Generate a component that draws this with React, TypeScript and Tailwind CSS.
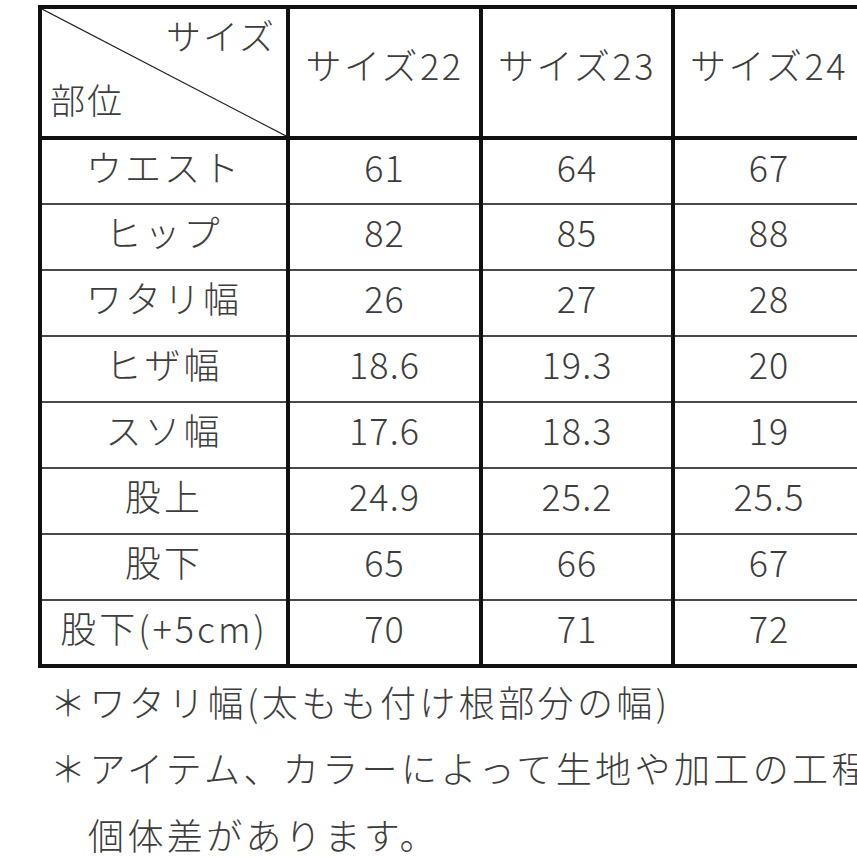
const rows: [string, string, string, string][] = [
  ['ウエスト', '61', '64', '67'],
  ['ヒップ', '82', '85', '88'],
  ['ワタリ幅', '26', '27', '28'],
  ['ヒザ幅', '18.6', '19.3', '20'],
  ['スソ幅', '17.6', '18.3', '19'],
  ['股上', '24.9', '25.2', '25.5'],
  ['股下', '65', '66', '67'],
  ['股下(+5cm)', '70', '71', '72'],
];

export default function App() {
  return (
    <div className="w-[857px] h-[857px] overflow-hidden bg-white text-[#3d3d3d] font-light font-['Noto_Sans_CJK_JP',sans-serif]">
      <table className="ml-[38px] mt-[5px] table-fixed border-collapse w-[825px]">
        <colgroup>
          <col className="w-[248px]" />
          <col className="w-[193px]" />
          <col className="w-[192px]" />
          <col className="w-[192px]" />
        </colgroup>
        <thead>
          <tr className="h-[131px]">
            <th className="relative border-4 border-[#111] p-0 font-light">
              {/* diagonal split */}
              <svg className="absolute inset-0 w-full h-full" preserveAspectRatio="none" viewBox="0 0 100 100">
                <line x1="0" y1="0" x2="100" y2="100" stroke="#222" strokeWidth="1.2" vectorEffect="non-scaling-stroke" />
              </svg>
              <div className="relative flex flex-col h-[127px] text-[35px] leading-none tracking-[2px]">
                <span className="self-end mr-[10px] mt-[8px]">サイズ</span>
                <span className="self-start ml-[8px] mt-[29px]">部位</span>
              </div>
            </th>
            {['サイズ22', 'サイズ23', 'サイズ24'].map((s) => (
              <th
                key={s}
                className="border-4 border-[#111] p-0 pb-[18px] font-light text-[36px] leading-none tracking-[2.5px] text-center whitespace-nowrap"
              >
                {s}
              </th>
            ))}
          </tr>
        </thead>
        <tbody>
          {rows.map((r, i) => (
            <tr key={r[0]} className="h-[66px]">
              {r.map((c, j) => (
                <td
                  key={j}
                  className={`p-0 pb-[12px] text-center text-[36px] leading-none whitespace-nowrap border-x-4 border-x-[#111] ${
                    j === 0 ? 'tracking-[3px]' : 'tracking-[1px]'
                  } ${i === rows.length - 1 ? 'border-b-4 border-b-[#111]' : 'border-b-2 border-b-[#4a4a4a]'}`}
                >
                  {c}
                </td>
              ))}
            </tr>
          ))}
        </tbody>
      </table>
      <div className="pl-[50px] text-[36px] leading-[66px] whitespace-nowrap tracking-[3.4px]">
        <p>＊ワタリ幅(太もも付け根部分の幅)</p>
        <p>＊アイテム、カラーによって生地や加工の工程</p>
        <p className="pl-[38px] leading-[50px] mt-[9px]">個体差があります。</p>
      </div>
    </div>
  );
}
